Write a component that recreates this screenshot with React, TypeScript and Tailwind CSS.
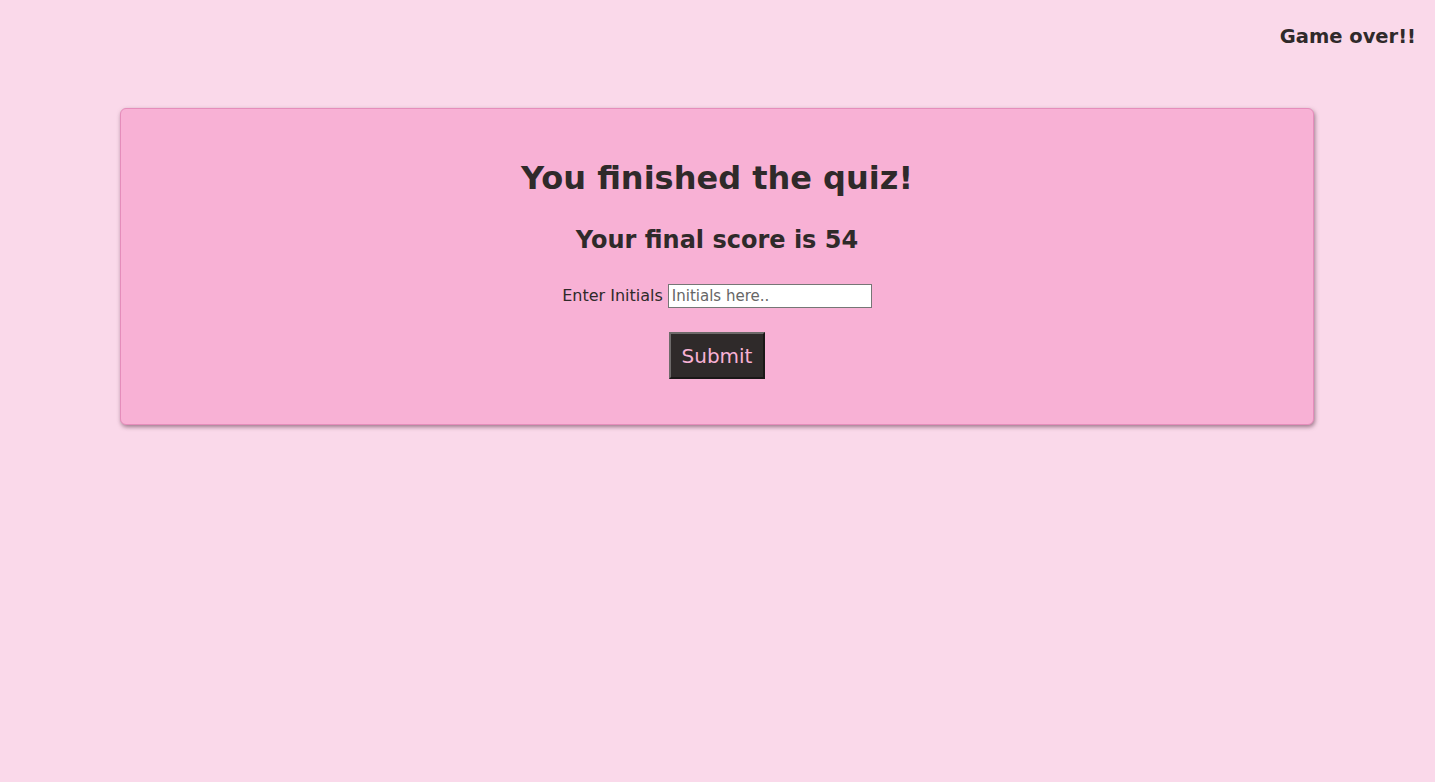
import React from "react";

export default function App() {
  return (
    <div
      className="min-h-[782px] w-full bg-[#fad9ea] text-[#2f2a2a] overflow-hidden"
      style={{ fontFamily: '"DejaVu Sans", Verdana, sans-serif' }}
    >
      <div className="flex justify-end pr-[19px] pt-[25px] h-[60px]">
        <p className="text-[19.5px] font-bold leading-[24px]">Game over!!</p>
      </div>
      <div className="flex pt-[48px]">
        <div className="ml-[120px] w-[1194px] h-[317px] rounded-[6px] border border-[#e58dbb] bg-[#f8b1d5] shadow-[1px_2px_4px_rgba(80,40,60,0.55)] flex flex-col items-center pt-[49px]">
          <h1 className="text-[32px] font-bold leading-[40px]">You finished the quiz!</h1>
          <h2 className="text-[24px] font-bold leading-[30px] mt-[27px]">Your final score is 54</h2>
          <div className="flex items-center mt-[29px] text-[16px]">
            <label className="mr-[5px]">Enter Initials</label>
            <input
              placeholder="Initials here.."
              className="w-[204px] h-[24px] bg-white border border-[#767676] px-[3px] text-[15px] placeholder:text-[#666666] outline-none"
              style={{ fontFamily: '"DejaVu Sans", Verdana, sans-serif' }}
            />
          </div>
          <button
            className="mt-[24px] w-[96px] h-[47px] bg-[#2f2a2a] text-[#f8b1d5] text-[20px] border-2 border-t-[#6e6a6a] border-l-[#6e6a6a] border-r-[#1a1717] border-b-[#1a1717]"
            style={{ fontFamily: '"DejaVu Sans", Verdana, sans-serif' }}
          >
            Submit
          </button>
        </div>
      </div>
    </div>
  );
}
